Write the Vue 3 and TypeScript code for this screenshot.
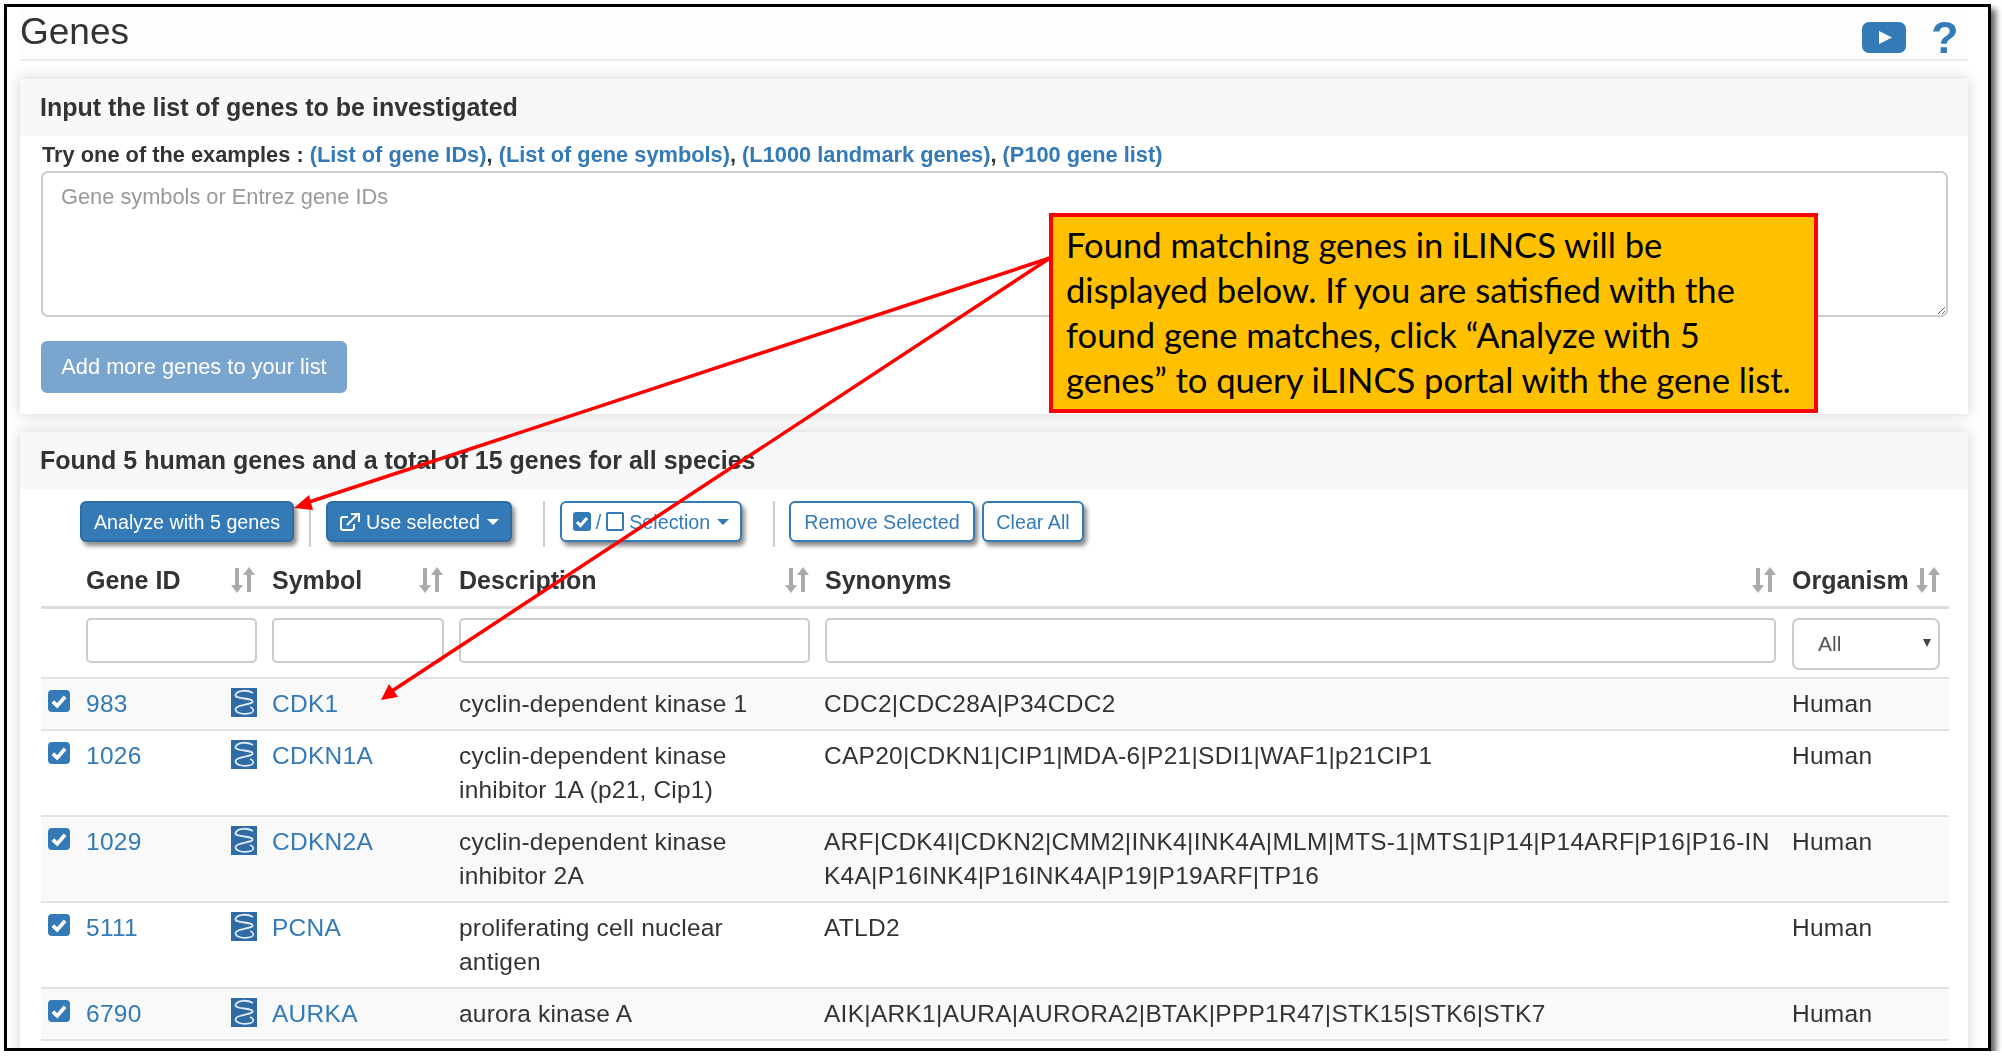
<script setup lang="ts">
interface Gene {
  id: string
  symbol: string
  desc: string[]
  syn: string[]
}
const genes: Gene[] = [
  { id: '983', symbol: 'CDK1', desc: ['cyclin-dependent kinase 1'], syn: ['CDC2|CDC28A|P34CDC2'] },
  { id: '1026', symbol: 'CDKN1A', desc: ['cyclin-dependent kinase', 'inhibitor 1A (p21, Cip1)'], syn: ['CAP20|CDKN1|CIP1|MDA-6|P21|SDI1|WAF1|p21CIP1'] },
  { id: '1029', symbol: 'CDKN2A', desc: ['cyclin-dependent kinase', 'inhibitor 2A'], syn: ['ARF|CDK4I|CDKN2|CMM2|INK4|INK4A|MLM|MTS-1|MTS1|P14|P14ARF|P16|P16-IN', 'K4A|P16INK4|P16INK4A|P19|P19ARF|TP16'] },
  { id: '5111', symbol: 'PCNA', desc: ['proliferating cell nuclear', 'antigen'], syn: ['ATLD2'] },
  { id: '6790', symbol: 'AURKA', desc: ['aurora kinase A'], syn: ['AIK|ARK1|AURA|AURORA2|BTAK|PPP1R47|STK15|STK6|STK7'] },
  { id: '', symbol: '', desc: [''], syn: [''] }
]
const headers = [
  { label: 'Gene ID', cls: 'h-id' },
  { label: 'Symbol', cls: 'h-sym' },
  { label: 'Description', cls: 'h-desc' },
  { label: 'Synonyms', cls: 'h-syn' }
]
</script>

<template>
  <div class="frame">
    <header class="top">
      <h1>Genes</h1>
      <div class="top-icons">
        <svg class="play" viewBox="0 0 44 31" aria-hidden="true">
          <rect width="44" height="31" rx="7" fill="#337ab7" />
          <path d="M17 9 L30 15.5 L17 22 Z" fill="#fff" />
        </svg>
        <span class="help">?</span>
      </div>
    </header>

    <section class="panel first">
      <div class="panel-head">Input the list of genes to be investigated</div>
      <div class="panel-body">
        <div class="examples">
          Try one of the examples :
          <a>(List of gene IDs)</a>, <a>(List of gene symbols)</a>, <a>(L1000 landmark genes)</a>, <a>(P100 gene list)</a>
        </div>
        <textarea class="gene-input" placeholder="Gene symbols or Entrez gene IDs"></textarea>
        <button class="btn add">Add more genes to your list</button>
      </div>
    </section>

    <section class="panel second">
      <div class="panel-head">Found 5 human genes and a total of 15 genes for all species</div>
      <div class="toolbar">
        <button class="btn solid b-analyze">Analyze with 5 genes</button>
        <i class="sep"></i>
        <button class="btn solid b-use">
          <svg class="ext" viewBox="0 0 22 20" aria-hidden="true">
            <path d="M15 12v4a2 2 0 0 1-2 2H4a2 2 0 0 1-2-2V7a2 2 0 0 1 2-2h5" fill="none" stroke="#fff" stroke-width="2" />
            <path d="M8 13 L18 3 M12 2 H20 V10" fill="none" stroke="#fff" stroke-width="2" />
          </svg>
          Use selected <b class="caret"></b>
        </button>
        <i class="sep"></i>
        <button class="btn outline b-selection">
          <span class="box on">
            <svg viewBox="0 0 18 18" aria-hidden="true"><path d="M4 9.5 L7.5 13 L14 5.5" fill="none" stroke="#fff" stroke-width="3" /></svg>
          </span>
          / <span class="box off"></span> Selection <b class="caret"></b>
        </button>
        <i class="sep"></i>
        <button class="btn outline b-remove">Remove Selected</button>
        <button class="btn outline b-clear">Clear All</button>
      </div>

      <div class="table">
        <div class="row head">
          <div v-for="h in headers" :key="h.label" class="th" :class="h.cls">
            <span>{{ h.label }}</span>
            <svg class="sort" viewBox="0 0 24 26" aria-hidden="true">
              <path d="M4 1h4v17h4l-6 8-6-8h4z" fill="#aaa" />
              <path d="M16 25h4V8h4L18 0l-6 8h4z" fill="#aaa" />
            </svg>
          </div>
          <div class="th h-org">
            <span>Organism</span>
            <svg class="sort" viewBox="0 0 24 26" aria-hidden="true">
              <path d="M4 1h4v17h4l-6 8-6-8h4z" fill="#aaa" />
              <path d="M16 25h4V8h4L18 0l-6 8h4z" fill="#aaa" />
            </svg>
          </div>
        </div>

        <div class="row filters">
          <input class="f f-id" type="text" />
          <input class="f f-sym" type="text" />
          <input class="f f-desc" type="text" />
          <input class="f f-syn" type="text" />
          <div class="f-org">
            <select><option>All</option></select>
          </div>
        </div>

        <div v-for="(g, i) in genes" :key="i" class="row data" :class="{ odd: i % 2 === 0 }">
          <div class="c-check">
            <span v-if="g.id" class="box on big">
              <svg viewBox="0 0 18 18" aria-hidden="true"><path d="M4 9.5 L7.5 13 L14 5.5" fill="none" stroke="#fff" stroke-width="3" /></svg>
            </span>
          </div>
          <a class="c-id">{{ g.id }}</a>
          <div class="c-icon">
            <svg viewBox="0 0 26 29" aria-hidden="true">
              <rect width="26" height="29" fill="#2f6ba5" />
              <path d="M22 5 C16 1.5 6 2 4.5 7 C4 11.5 20 9.5 21.5 13 C23 17 5 16 4.5 21 C4.5 25 12 27 20 25" fill="none" stroke="#dfeaf4" stroke-width="1.8" />
              <path d="M19 19 C23 20.5 23.5 23.5 20 25" fill="none" stroke="#dfeaf4" stroke-width="1.6" />
            </svg>
          </div>
          <a class="c-sym">{{ g.symbol }}</a>
          <div class="c-desc"><div v-for="l in g.desc" :key="l">{{ l }}</div></div>
          <div class="c-syn"><div v-for="l in g.syn" :key="l">{{ l }}</div></div>
          <div class="c-org">{{ g.id ? 'Human' : '' }}</div>
        </div>
      </div>
    </section>

    <svg class="arrows" viewBox="7 7 1981 1041" aria-hidden="true">
      <path d="M1050 258 L306 503" stroke="#f00" stroke-width="3.5" fill="none" />
      <path d="M294 508 L309 495 L313 510 Z" fill="#f00" />
      <path d="M1050 258 L392 691" stroke="#f00" stroke-width="3.5" fill="none" />
      <path d="M381 700 L389 684 L398 697 Z" fill="#f00" />
    </svg>

    <aside class="note">
      Found matching genes in iLINCS will be<br />
      displayed below. If you are satisfied with the<br />
      found gene matches, click “Analyze with 5<br />
      genes” to query iLINCS portal with the gene list.
    </aside>
  </div>
</template>

<style>
html, body { margin: 0; background: #fff; }
</style>

<style scoped>
* { box-sizing: border-box; }
.frame {
  position: relative;
  width: 1987px;
  height: 1047px;
  margin: 4px 0 0 4px;
  border: 3px solid #000;
  box-shadow: 5px 5px 6px rgba(0, 0, 0, .6);
  background: #fff;
  overflow: hidden;
  padding: 0 20px 0 13px;
  font-family: "Liberation Sans", Arial, sans-serif;
  font-size: 24.5px;
  letter-spacing: .27px;
  line-height: 34px;
  color: #333;
  filter: blur(.3px);
}
a { color: #337ab7; }
.top {
  height: 54px;
  display: flex;
  justify-content: space-between;
  align-items: flex-start;
  border-bottom: 2px solid #eee;
  background: #fdfdfd;
}
h1 {
  margin: 5px 0 0 0;
  font-weight: 400;
  font-size: 37px;
  line-height: 40px;
  letter-spacing: 0;
  color: #333;
}
.top-icons { display: flex; align-items: center; margin: 15px 12px 0 0; gap: 25px; }
.play { width: 44px; height: 31px; display: block; }
.help { font-weight: 700; font-size: 45px; line-height: 31px; color: #337ab7; width: 25px; letter-spacing: 0; }

.panel { background: #fff; box-shadow: 0 0 14px rgba(0, 0, 0, .18); }
.first { margin-top: 18px; height: 335px; }
.second { margin-top: 18px; }
.panel-head {
  height: 57px;
  padding-left: 20px;
  background: #f7f8fa;
  font-weight: 700;
  font-size: 25px;
  line-height: 57px;
  letter-spacing: 0;
  color: #333;
}
.panel-body { padding: 0 20px 0 21px; }
.examples {
  height: 35px;
  padding-left: 1px;
  font-weight: 700;
  font-size: 21.8px;
  line-height: 38px;
  letter-spacing: 0;
}
.gene-input {
  display: block;
  width: 100%;
  height: 146px;
  padding: 9px 18px;
  border: 2px solid #ccc;
  border-radius: 7px;
  resize: vertical;
  font: inherit;
  font-size: 21.8px;
  line-height: 30px;
  letter-spacing: 0;
  outline: none;
}
.gene-input::placeholder { color: #999; }
.btn {
  font-family: inherit;
  font-size: 19.7px;
  letter-spacing: 0;
  line-height: 28px;
  border-radius: 6px;
  cursor: default;
  white-space: nowrap;
}
.add {
  display: block;
  margin-top: 24px;
  width: 306px;
  height: 52px;
  padding: 0;
  border: 2px solid #7aa5cf;
  background: #7aa5cf;
  color: #fff;
  font-size: 21.8px;
}
.toolbar {
  height: 58px;
  padding: 12px 0 0 60px;
  display: flex;
  align-items: flex-start;
}
.toolbar .btn {
  height: 41px;
  padding: 0;
  box-shadow: 3px 4px 4px rgba(0, 0, 0, .45);
}
.solid { background: #337ab7; border: 2px solid #2e6da4; color: #fff; }
.outline { background: #fff; border: 2px solid #337ab7; color: #337ab7; }
.sep { width: 2px; height: 46px; background: #ccc; flex: none; }
.b-analyze { width: 214px; margin-right: 15px; }
.b-use { width: 186px; margin: 0 31px 0 15px; display: flex; align-items: center; justify-content: center; gap: 5px; }
.b-selection { width: 182px; margin: 0 31px 0 15px; display: flex; align-items: center; justify-content: center; gap: 5px; }
.b-remove { width: 186px; margin: 0 7px 0 14px; }
.b-clear { width: 102px; }
.ext { width: 22px; height: 20px; }
.caret {
  display: inline-block;
  width: 0;
  height: 0;
  margin-left: 2px;
  border-left: 6px solid transparent;
  border-right: 6px solid transparent;
  border-top: 6px solid currentColor;
}
.box { display: inline-flex; width: 18px; height: 19px; border-radius: 3px; }
.box svg { width: 100%; height: 100%; display: block; }
.box.on { background: #337ab7; }
.box.off { border: 2px solid #337ab7; background: #fff; border-radius: 2px; }
.box.big { width: 22px; height: 22px; border-radius: 4px; }

.table { margin: 0 19px 0 21px; }
.row {
  display: grid;
  grid-template-columns: 45px 145px 41px 187px 366px 967px 156px;
}
.head { height: 62px; padding-top: 6px; border-bottom: 3px solid #ddd; align-items: center; }
.th {
  display: flex;
  justify-content: space-between;
  align-items: center;
  font-weight: 700;
  font-size: 25px;
  letter-spacing: 0;
  padding-right: 16px;
}
.h-id { grid-column: 2 / 4; padding-right: 17px; }
.h-sym { grid-column: 4; }
.h-desc { grid-column: 5; }
.h-syn { grid-column: 6; }
.h-org { grid-column: 7; padding-right: 8px; }
.sort { width: 24px; height: 26px; flex: none; }
.filters { height: 70px; padding-top: 9px; border-bottom: 2px solid #e2e2e2; align-items: start; }
.f {
  display: block;
  height: 45px;
  border: 2px solid #ccc;
  border-radius: 5px;
  background: #fff;
  outline: none;
}
.f-id { grid-column: 2 / 4; width: 171px; }
.f-sym { grid-column: 4; width: 172px; }
.f-desc { grid-column: 5; width: 351px; }
.f-syn { grid-column: 6; width: 951px; }
.f-org { grid-column: 7; width: 148px; position: relative; }
.f-org select {
  display: block;
  width: 100%;
  height: 52px;
  padding: 0 0 0 24px;
  appearance: none;
  border: 2px solid #ccc;
  border-radius: 7px;
  background: #fff;
  font: inherit;
  font-size: 21px;
  letter-spacing: 0;
  color: #555;
  outline: none;
}
.f-org::after {
  content: "";
  position: absolute;
  right: 9px;
  top: 21px;
  border-left: 4.5px solid transparent;
  border-right: 4.5px solid transparent;
  border-top: 8px solid #444;
}
.data { border-bottom: 2px solid #e2e2e2; padding: 8px 0 8px; min-height: 52px; }
.odd { background: #f9f9f9; }
.c-check { padding: 3px 0 0 7px; line-height: 0; }
.c-icon { height: 29px; margin-top: 1px; }
.c-icon svg { display: block; width: 26px; height: 29px; }
.c-desc { letter-spacing: .2px; }
.c-syn { white-space: nowrap; margin-left: -1px; }
.arrows {
  position: absolute;
  left: 0;
  top: 0;
  width: 1981px;
  height: 1041px;
  pointer-events: none;
}
.note {
  position: absolute;
  left: 1042px;
  top: 206px;
  width: 769px;
  height: 200px;
  padding: 5px 0 0 13px;
  border: 4px solid #f00;
  background: #ffc000;
  color: #000;
  font-family: Lato, sans-serif;
  font-size: 34.6px;
  line-height: 45px;
  letter-spacing: 0;
  white-space: nowrap;
}
</style>
